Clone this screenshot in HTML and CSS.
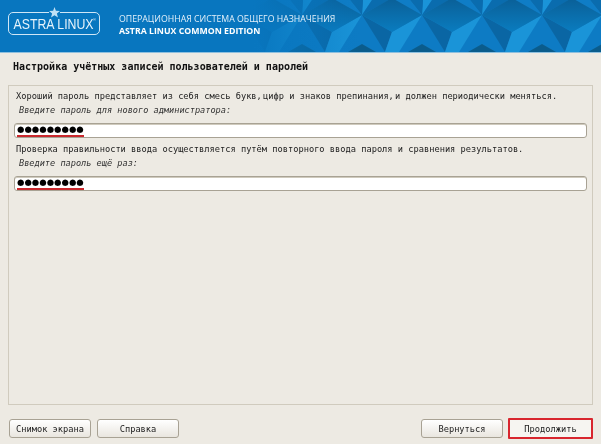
FILE: index.html
```html
<!DOCTYPE html>
<html lang="ru">
<head>
<meta charset="utf-8">
<title>Astra Linux</title>
<link rel="stylesheet" href="styles.css">
</head>
<body>
<div class="app">
  <header class="banner">
    <svg class="pattern" width="601" height="52" viewBox="0 0 601 52" aria-hidden="true">
      <defs>
        <linearGradient id="rh" x1="0" y1="0" x2="0" y2="1">
          <stop offset="0" stop-color="#0a5f97"/>
          <stop offset="1" stop-color="#0a7cbf"/>
        </linearGradient>
        <g id="spike">
          <polygon points="0,15 1,0 10,0" fill="#1a94d8"/>
          <polygon points="0,15 10,0 27,0" fill="#0a6cae"/>
          <polygon points="0,15 1,0 -12,0" fill="#0a6cae"/>
          <polygon points="0,15 -12,0 -27,0" fill="#0f7dc6"/>
          <polygon points="0,44 -14,52 14,52" fill="#0a5c8c"/>
        </g>
        <pattern id="tile" x="2" y="0" width="60" height="52" patternUnits="userSpaceOnUse">
          <rect width="60" height="52" fill="#0d7bc4"/>
          <polygon points="0,15 30,32 23,52" fill="#0a66a4"/>
          <polygon points="30,32 60,15 37,52 23,52" fill="#1a94d8"/>
          <use href="#spike"/>
          <use href="#spike" x="60"/>
          <polygon points="0,15 30,-2 60,15 30,32" fill="url(#rh)"/>
        </pattern>
        <linearGradient id="fade" x1="0" y1="0" x2="1" y2="0">
          <stop offset="0.42" stop-color="#0876bf"/>
          <stop offset="0.6" stop-color="#0876bf" stop-opacity="0"/>
        </linearGradient>
      </defs>
      <rect width="601" height="52" fill="url(#tile)"/>
      <rect width="601" height="52" fill="url(#fade)"/>
    </svg>
    <div class="logo">
      <svg class="logo-star" width="11" height="11" viewBox="0 0 12 12" aria-hidden="true">
        <polygon points="6,0 7.5,4 12,4.4 8.6,7.2 9.8,11.5 6,9.1 2.2,11.5 3.4,7.2 0,4.4 4.5,4" fill="#bfe0f5"/>
      </svg>
      <span class="logo-text">ASTRA LINUX</span><span class="logo-reg">®</span>
    </div>
    <div class="tagline">
      <div>ОПЕРАЦИОННАЯ СИСТЕМА ОБЩЕГО НАЗНАЧЕНИЯ</div>
      <div class="tagline-bold">ASTRA LINUX COMMON EDITION</div>
    </div>
  </header>
  <main class="content">
    <h1 class="title">Настройка учётных записей пользователей и паролей</h1>
    <section class="panel">
      <p class="hint">Хороший пароль представляет из себя смесь букв<span class="tight">, </span>цифр и знаков препинания<span class="tight">, </span>и должен периодически меняться.</p>
      <p class="label">Введите пароль для нового администратора:</p>
      <div class="field"><span class="dots">●●●●●●●●●</span></div>
      <p class="hint">Проверка правильности ввода осуществляется путём повторного ввода пароля и сравнения результатов.</p>
      <p class="label">Введите пароль ещё раз:</p>
      <div class="field"><span class="dots">●●●●●●●●●</span></div>
    </section>
    <footer class="actions">
      <button class="btn">Снимок экрана</button>
      <button class="btn">Справка</button>
      <span class="spacer"></span>
      <button class="btn">Вернуться</button>
      <button class="btn btn-primary">Продолжить</button>
    </footer>
  </main>
</div>
</body>
</html>
```
FILE: styles.css
```css
* { box-sizing: border-box; }
html, body { margin: 0; padding: 0; }
body { width: 601px; height: 444px; overflow: hidden; background: #edeae3; font-family: "DejaVu Sans Mono", monospace; color: #1c1c1c; }
.app { display: flex; flex-direction: column; height: 444px; filter: blur(0.3px); }
.banner { position: relative; flex: none; height: 53px; display: flex; align-items: flex-start; background: #0876bf; border-bottom: 1px solid #8fc0de; color: #fff; overflow: hidden; }
.pattern { position: absolute; left: 0; top: 0; }
.logo { position: relative; flex: none; width: 92px; height: 23px; margin: 12px 0 0 8px; border: 1.2px solid #cfe6f6; border-radius: 5px; display: flex; align-items: center; justify-content: center; font-family: "Liberation Sans", sans-serif; color: #e6f3fb; }
.logo-star { position: absolute; left: 40px; top: -6px; background: #0876bf; }
.logo-text { font-size: 14px; transform: scaleX(0.88); white-space: nowrap; }
.logo-reg { position: absolute; right: 3px; top: 4px; font-size: 4px; }
.tagline { position: relative; margin: 13px 0 0 19px; font-family: "Open Sans", sans-serif; font-size: 8.75px; line-height: 12px; white-space: nowrap; color: #e3f0fa; }
.tagline-bold { font-weight: 700; color: #fff; }
.content { flex: 1; display: flex; flex-direction: column; padding: 0 8px 6px 8px; }
.title { margin: 7px 0 0 5px; height: 25px; font-size: 10px; line-height: 13px; font-weight: 700; color: #111; }
.panel { height: 320px; padding: 3px 5px 0 5px; border: 1px solid #d0cbbe; background: #edeae3; }
.hint { margin: 0 0 0 2px; height: 14px; font-size: 8.7px; line-height: 14px; white-space: nowrap; color: #222; }
.tight { letter-spacing: -2px; }
.label { margin: 0 0 0 5px; height: 14px; font-size: 8.6px; line-height: 15px; font-style: italic; white-space: nowrap; color: #333; }
.field { height: 15px; margin: 6px 0 4px 0; padding-left: 2px; background: #fff; border: 1px solid #a8a294; border-radius: 3px; box-shadow: inset 0 1px 0 #cfcabd; display: flex; align-items: flex-start; }
.field + .hint { margin-top: 4px; }
.dots { display: inline-block; height: 13px; font-family: "DejaVu Sans", sans-serif; font-size: 8.5px; line-height: 11px; color: #000; border-bottom: 2px solid #c9282d; }
.actions { display: flex; gap: 6px; margin-top: 13px; padding-left: 1px; align-items: center; }
.spacer { flex: 1; }
.btn { width: 82px; height: 19px; padding: 0; font-family: "DejaVu Sans Mono", monospace; font-size: 8.7px; color: #1c1c1c; background: linear-gradient(#ffffff, #e9e6df); border: 1px solid #a8a294; border-radius: 3px; }
.btn-primary { width: 85px; height: 21px; border: 2px solid #d8262e; border-radius: 1px; background: #f6f5f1; margin-left: -1px; }
```
